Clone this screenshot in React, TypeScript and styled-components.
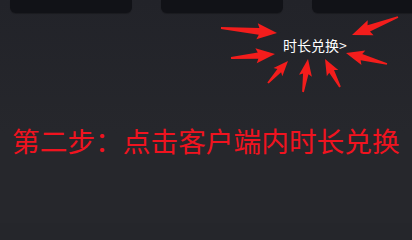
import React from "react";
import styled, { createGlobalStyle } from "styled-components";

const GlobalStyle = createGlobalStyle`
  html, body {
    margin: 0;
    padding: 0;
    background: #25262b;
  }
  body {
    font-family: "Noto Sans CJK SC", "Noto Sans", sans-serif;
  }
`;

const Page = styled.div`
  width: 412px;
  height: 223px;
  overflow: hidden;
  background: linear-gradient(180deg, #222329 0%, #26272c 60%, #26272c 100%);
  display: flex;
  flex-direction: column;
`;

const CardRow = styled.div`
  display: flex;
  gap: 29px;
  padding-left: 10px;
  height: 13px;
  flex: none;
`;

const Card = styled.div`
  flex: none;
  width: 122px;
  height: 13px;
  background: #111217;
  border-radius: 0 0 6px 6px;
  box-shadow: 0 1px 1px rgba(0, 0, 0, 0.25);
`;

const Callout = styled.div`
  position: relative;
  height: 87px;
  flex: none;
  display: flex;
  align-items: flex-start;
  padding: 24.5px 0 0 283px;
  box-sizing: border-box;
`;

const CalloutLabel = styled.span`
  position: relative;
  z-index: 1;
  display: block;
  font-size: 14px;
  line-height: 1;
  color: #ffffff;
  white-space: nowrap;
`;

const ArrowLayer = styled.svg`
  position: absolute;
  left: 0;
  top: 0;
  width: 412px;
  height: 87px;
  pointer-events: none;
`;

const Title = styled.h1`
  margin: 27px 0 0 0;
  padding-left: 12px;
  font-size: 27.7px;
  line-height: 1;
  font-weight: 400;
  color: #f0131f;
  white-space: nowrap;
`;

type Arrow = {
  tail: [number, number];
  tip: [number, number];
  head: number;
  hw: number;
};

const arrows: Arrow[] = [
  { tail: [221, 28], tip: [277, 33], head: 18, hw: 8 },
  { tail: [231, 58], tip: [275, 54], head: 17, hw: 7.5 },
  { tail: [268, 83], tip: [288, 61], head: 13, hw: 6 },
  { tail: [303, 92], tip: [308, 59], head: 15, hw: 6.5 },
  { tail: [340, 87], tip: [325, 59], head: 14, hw: 6.5 },
  { tail: [398, 17], tip: [352, 35], head: 18, hw: 8 },
  { tail: [387, 64], tip: [346, 53], head: 16, hw: 7.5 },
];

function arrowPoints(a: Arrow): string {
  const [x1, y1] = a.tail;
  const [x2, y2] = a.tip;
  const dx = x2 - x1;
  const dy = y2 - y1;
  const len = Math.hypot(dx, dy);
  const ux = dx / len;
  const uy = dy / len;
  const nx = -uy;
  const ny = ux;
  const at = (d: number, w: number): string =>
    `${(x1 + ux * d + nx * w).toFixed(2)},${(y1 + uy * d + ny * w).toFixed(2)}`;
  const base = len - a.head;
  const barb = len - a.head - 2;
  const shaft = a.hw * 0.42;
  return [
    at(0, 0.9),
    at(base, shaft),
    at(barb, a.hw),
    at(len, 0),
    at(barb, -a.hw),
    at(base, -shaft),
    at(0, -0.9),
  ].join(" ");
}

export default function App() {
  return (
    <>
      <GlobalStyle />
      <Page>
        <CardRow>
          <Card />
          <Card />
          <Card />
        </CardRow>
        <Callout>
          <ArrowLayer viewBox="0 13 412 87">
            {arrows.map((a, i) => (
              <polygon key={i} points={arrowPoints(a)} fill="#f31d1c" />
            ))}
          </ArrowLayer>
          <CalloutLabel>时长兑换&gt;</CalloutLabel>
        </Callout>
        <Title>第二步：点击客户端内时长兑换</Title>
      </Page>
    </>
  );
}
